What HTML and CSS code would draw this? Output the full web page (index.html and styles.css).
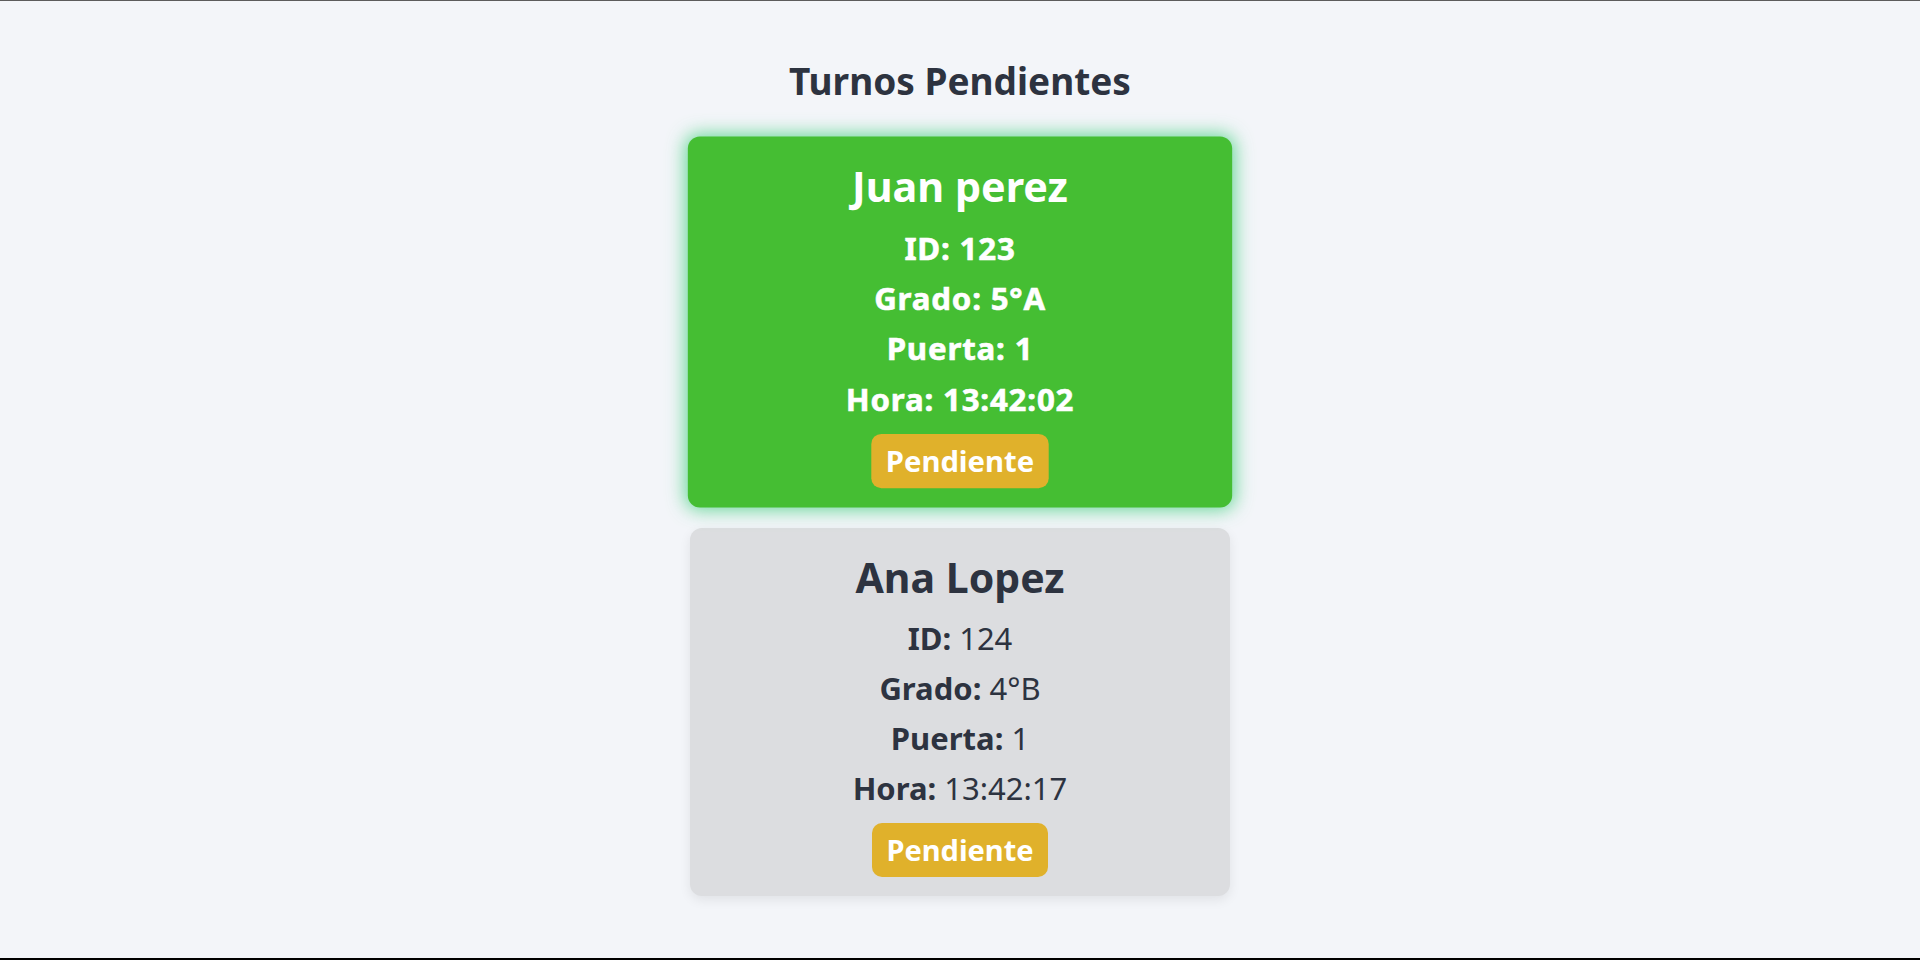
FILE: index.html
```html
<!DOCTYPE html>
<html lang="es">

<head>
    <meta charset="UTF-8">
    <meta name="viewport" content="width=device-width, initial-scale=1.0">
    <title>Turnos Pendientes</title>
    <link rel="stylesheet" href="styles.css">
</head>

<body>
    <div class="page">
        <h1 class="title">Turnos Pendientes</h1>

        <div class="turnos">
            <div class="turno activo">
                <h2>Juan perez</h2>
                <p><strong>ID:</strong> 123</p>
                <p><strong>Grado:</strong> 5°A</p>
                <p><strong>Puerta:</strong> 1</p>
                <p><strong>Hora:</strong> 13:42:02</p>
                <span class="estado">Pendiente</span>
            </div>

            <div class="turno">
                <h2>Ana Lopez</h2>
                <p><strong>ID:</strong> 124</p>
                <p><strong>Grado:</strong> 4°B</p>
                <p><strong>Puerta:</strong> 1</p>
                <p><strong>Hora:</strong> 13:42:17</p>
                <span class="estado">Pendiente</span>
            </div>
        </div>
    </div>
</body>

</html>
```

FILE: styles.css
```css
body {
    margin: 0;
    padding: 0;
    background-color: #f3f5f9;
    font-family: "Noto Sans", "Open Sans", sans-serif;
    color: #2d3340;
}

.page {
    min-height: 100vh;
    box-sizing: border-box;
    border-top: 1px solid #5c5c5c;
    border-bottom: 2px solid #000;
    padding-top: 53px;
}

.title {
    margin: 0 0 31px;
    font-size: 37px;
    line-height: 53px;
    font-weight: 700;
    text-align: center;
}

.turnos {
    display: flex;
    flex-direction: column;
    align-items: center;
    gap: 22px;
}

.turno {
    width: 540px;
    box-sizing: border-box;
    padding: 21px 20px 19px;
    border-radius: 12px;
    background-color: #dcdde0;
    box-shadow: 0 4px 12px rgba(0, 0, 0, 0.08);
    text-align: center;
}

.turno h2 {
    margin: 0 0 13px;
    font-size: 41px;
    line-height: 56px;
    font-weight: 700;
}

.turno p {
    margin: 10px 0;
    font-size: 31px;
    line-height: 40px;
}

.turno p:first-of-type {
    margin-top: 0;
}

.turno strong {
    font-weight: 700;
}

/* el turno que se esta llamando */
.turno.activo {
    background-color: #45be33;
    color: #fff;
    box-shadow: 0 0 18px 2px rgba(46, 204, 113, 0.7);
    transform: scale(1.008);
}

.turno.activo p {
    font-weight: 700;
    letter-spacing: 0.8px;
    -webkit-text-stroke: 0.6px #fff;
}

.estado {
    display: inline-block;
    margin-top: 5px;
    padding: 7px 14px;
    border-radius: 10px;
    background-color: #e0b12b;
    color: #fff;
    font-size: 29px;
    line-height: 40px;
    font-weight: 700;
}
```
